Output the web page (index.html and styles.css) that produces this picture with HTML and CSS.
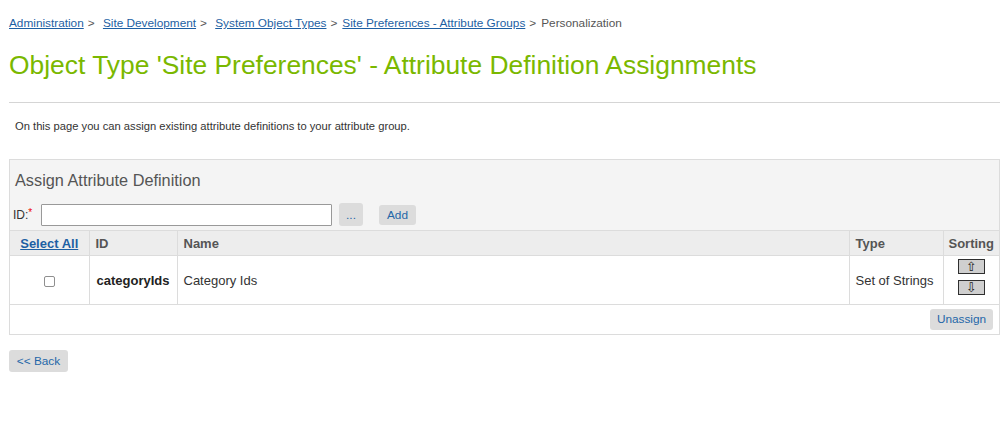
FILE: index.html
```html
<!DOCTYPE html>
<html>
<head>
<meta charset="utf-8">
<link rel="stylesheet" href="styles.css">
</head>
<body>
<div class="page">
  <div class="breadcrumb">
    <a href="#">Administration</a><span class="sep">&gt;</span>
    <a href="#">Site Development</a><span class="sep">&gt;</span>
    <a href="#">System Object Types</a><span class="sep">&gt;</span><a href="#">Site Preferences - Attribute Groups</a><span class="sep">&gt;</span><span class="current">Personalization</span>
  </div>
  <h1 class="title">Object Type 'Site Preferences' - Attribute Definition Assignments</h1>
  <hr class="rule">
  <p class="intro">On this page you can assign existing attribute definitions to your attribute group.</p>

  <div class="panel">
    <div class="panel-head">
      <div class="panel-title">Assign Attribute Definition</div>
      <div class="id-row">
        <label class="id-label">ID:<span class="req">*</span></label>
        <input class="id-input" type="text">
        <button class="btn btn-dots">...</button>
        <button class="btn btn-add">Add</button>
      </div>
    </div>
    <table class="grid">
      <thead>
        <tr>
          <th class="c-sel"><a href="#">Select All</a></th>
          <th class="c-id">ID</th>
          <th class="c-name">Name</th>
          <th class="c-type">Type</th>
          <th class="c-sort">Sorting</th>
        </tr>
      </thead>
      <tbody>
        <tr class="data">
          <td class="c-sel"><span class="checkbox"></span></td>
          <td class="c-id"><b>categoryIds</b></td>
          <td class="c-name">Category Ids</td>
          <td class="c-type">Set of Strings</td>
          <td class="c-sort">
            <div class="sort-btns">
              <span class="sort-btn">&#8679;</span>
              <span class="sort-btn">&#8681;</span>
            </div>
          </td>
        </tr>
        <tr class="foot">
          <td colspan="5"><div class="foot-inner"><button class="btn btn-unassign">Unassign</button></div></td>
        </tr>
      </tbody>
    </table>
  </div>

  <button class="btn btn-back">&lt;&lt; Back</button>
</div>
</body>
</html>
```

FILE: styles.css
```css
* { box-sizing: border-box; }
html, body { margin: 0; padding: 0; background: #fff; }
body {
  font-family: "Liberation Sans", Arial, Helvetica, sans-serif;
  color: #333;
}
.page { padding: 0 6px 0 9px; }

.breadcrumb {
  padding-top: 16px;
  font-size: 11.8px;
  line-height: 14px;
  color: #555;
  white-space: nowrap;
}
.breadcrumb a { color: #1d5fa3; text-decoration: underline; }
.breadcrumb .sep { margin: 0 5px 0 4px; color: #555; }
.breadcrumb .current { color: #555; }

.title {
  margin: 0;
  padding-top: 20px;
  font-size: 26.4px;
  line-height: 30px;
  font-weight: normal;
  color: #7ab800;
  white-space: nowrap;
}
.rule {
  margin: 22px 0 0 0;
  border: 0;
  border-top: 1px solid #d5d5d5;
  height: 0;
}
.intro {
  margin: 0;
  padding: 17px 0 0 6px;
  font-size: 11.2px;
  line-height: 13px;
  color: #333;
}

.panel {
  margin-top: 26px;
  border: 1px solid #dcdcdc;
  background: #fff;
}
.panel-head {
  background: #f4f4f4;
  padding: 10px 0 4px 5px;
}
.panel-title {
  font-size: 16.3px;
  line-height: 20px;
  color: #555;
}
.id-row {
  display: flex;
  align-items: center;
  margin-top: 13px;
  height: 23px;
}
.id-label {
  font-size: 12px;
  color: #333;
  margin-left: -2px;
  width: 28px;
}
.req { color: #e00; font-size: 10px; vertical-align: 3px; }
.id-input {
  width: 291px;
  height: 22px;
  border: 1px solid #999;
  border-radius: 1px;
  background: #fff;
  margin: 0;
  padding: 0;
}

.btn {
  font-family: "Liberation Sans", Arial, Helvetica, sans-serif;
  font-size: 11.8px;
  color: #2467a8;
  background: #dcdcdc;
  border: 0;
  border-radius: 3px;
  padding: 0;
  cursor: pointer;
}
.btn-dots { width: 24px; height: 23px; margin-left: 7px; }
.btn-add { width: 37px; height: 20px; margin-left: 16px; }

.grid {
  width: 100%;
  border-collapse: collapse;
  table-layout: fixed;
  font-size: 13px;
}
.grid th {
  background: #ededed;
  height: 25px;
  text-align: left;
  font-weight: bold;
  color: #555;
  padding: 0 0 0 6px;
  border-top: 1px solid #dcdcdc;
  border-left: 1px solid #dcdcdc;
  border-bottom: 1px solid #dcdcdc;
}
.grid th:first-child { border-left: 0; }
.grid th.c-sel { text-align: center; padding: 0; }
.grid th.c-sel a { color: #1d5fa3; text-decoration: underline; }
.grid th.c-sort { padding: 0; text-align: center; }
.c-sel { width: 79px; }
.c-id { width: 88px; }
.c-type { width: 94px; }
.c-sort { width: 56px; }

.grid td {
  height: 49px;
  padding: 0 0 0 6px;
  border-left: 1px solid #dcdcdc;
  border-bottom: 1px solid #dcdcdc;
  color: #333;
  vertical-align: middle;
}
.grid td:first-child { border-left: 0; }
.grid td.c-sel { text-align: center; padding: 0; }
.grid td.c-id { padding-left: 7px; color: #222; }
.grid td.c-sort { padding: 3px 0 0 0; vertical-align: top; }
.data td { line-height: 15px; }

.checkbox {
  display: inline-block;
  width: 11px;
  height: 11px;
  border: 1px solid #8f8f8f;
  border-radius: 2px;
  background: #fff;
  vertical-align: middle;
  margin-left: 1px;
}

.sort-btns {
  display: flex;
  flex-direction: column;
  align-items: center;
  gap: 6px;
}
.sort-btn {
  display: flex;
  align-items: center;
  justify-content: center;
  width: 27px;
  height: 15px;
  border: 1px solid #2f2f2f;
  background: #cfcfcf;
  font-size: 13px;
  line-height: 1;
  color: #222;
  font-family: "DejaVu Sans", sans-serif;
}

.foot td { height: 29px; border-bottom: 0; padding: 0; }
.foot-inner { display: flex; justify-content: flex-end; padding-right: 6px; }
.btn-unassign { width: 63px; height: 21px; }

.btn-back {
  margin-top: 15px;
  width: 59px;
  height: 22px;
}
```
